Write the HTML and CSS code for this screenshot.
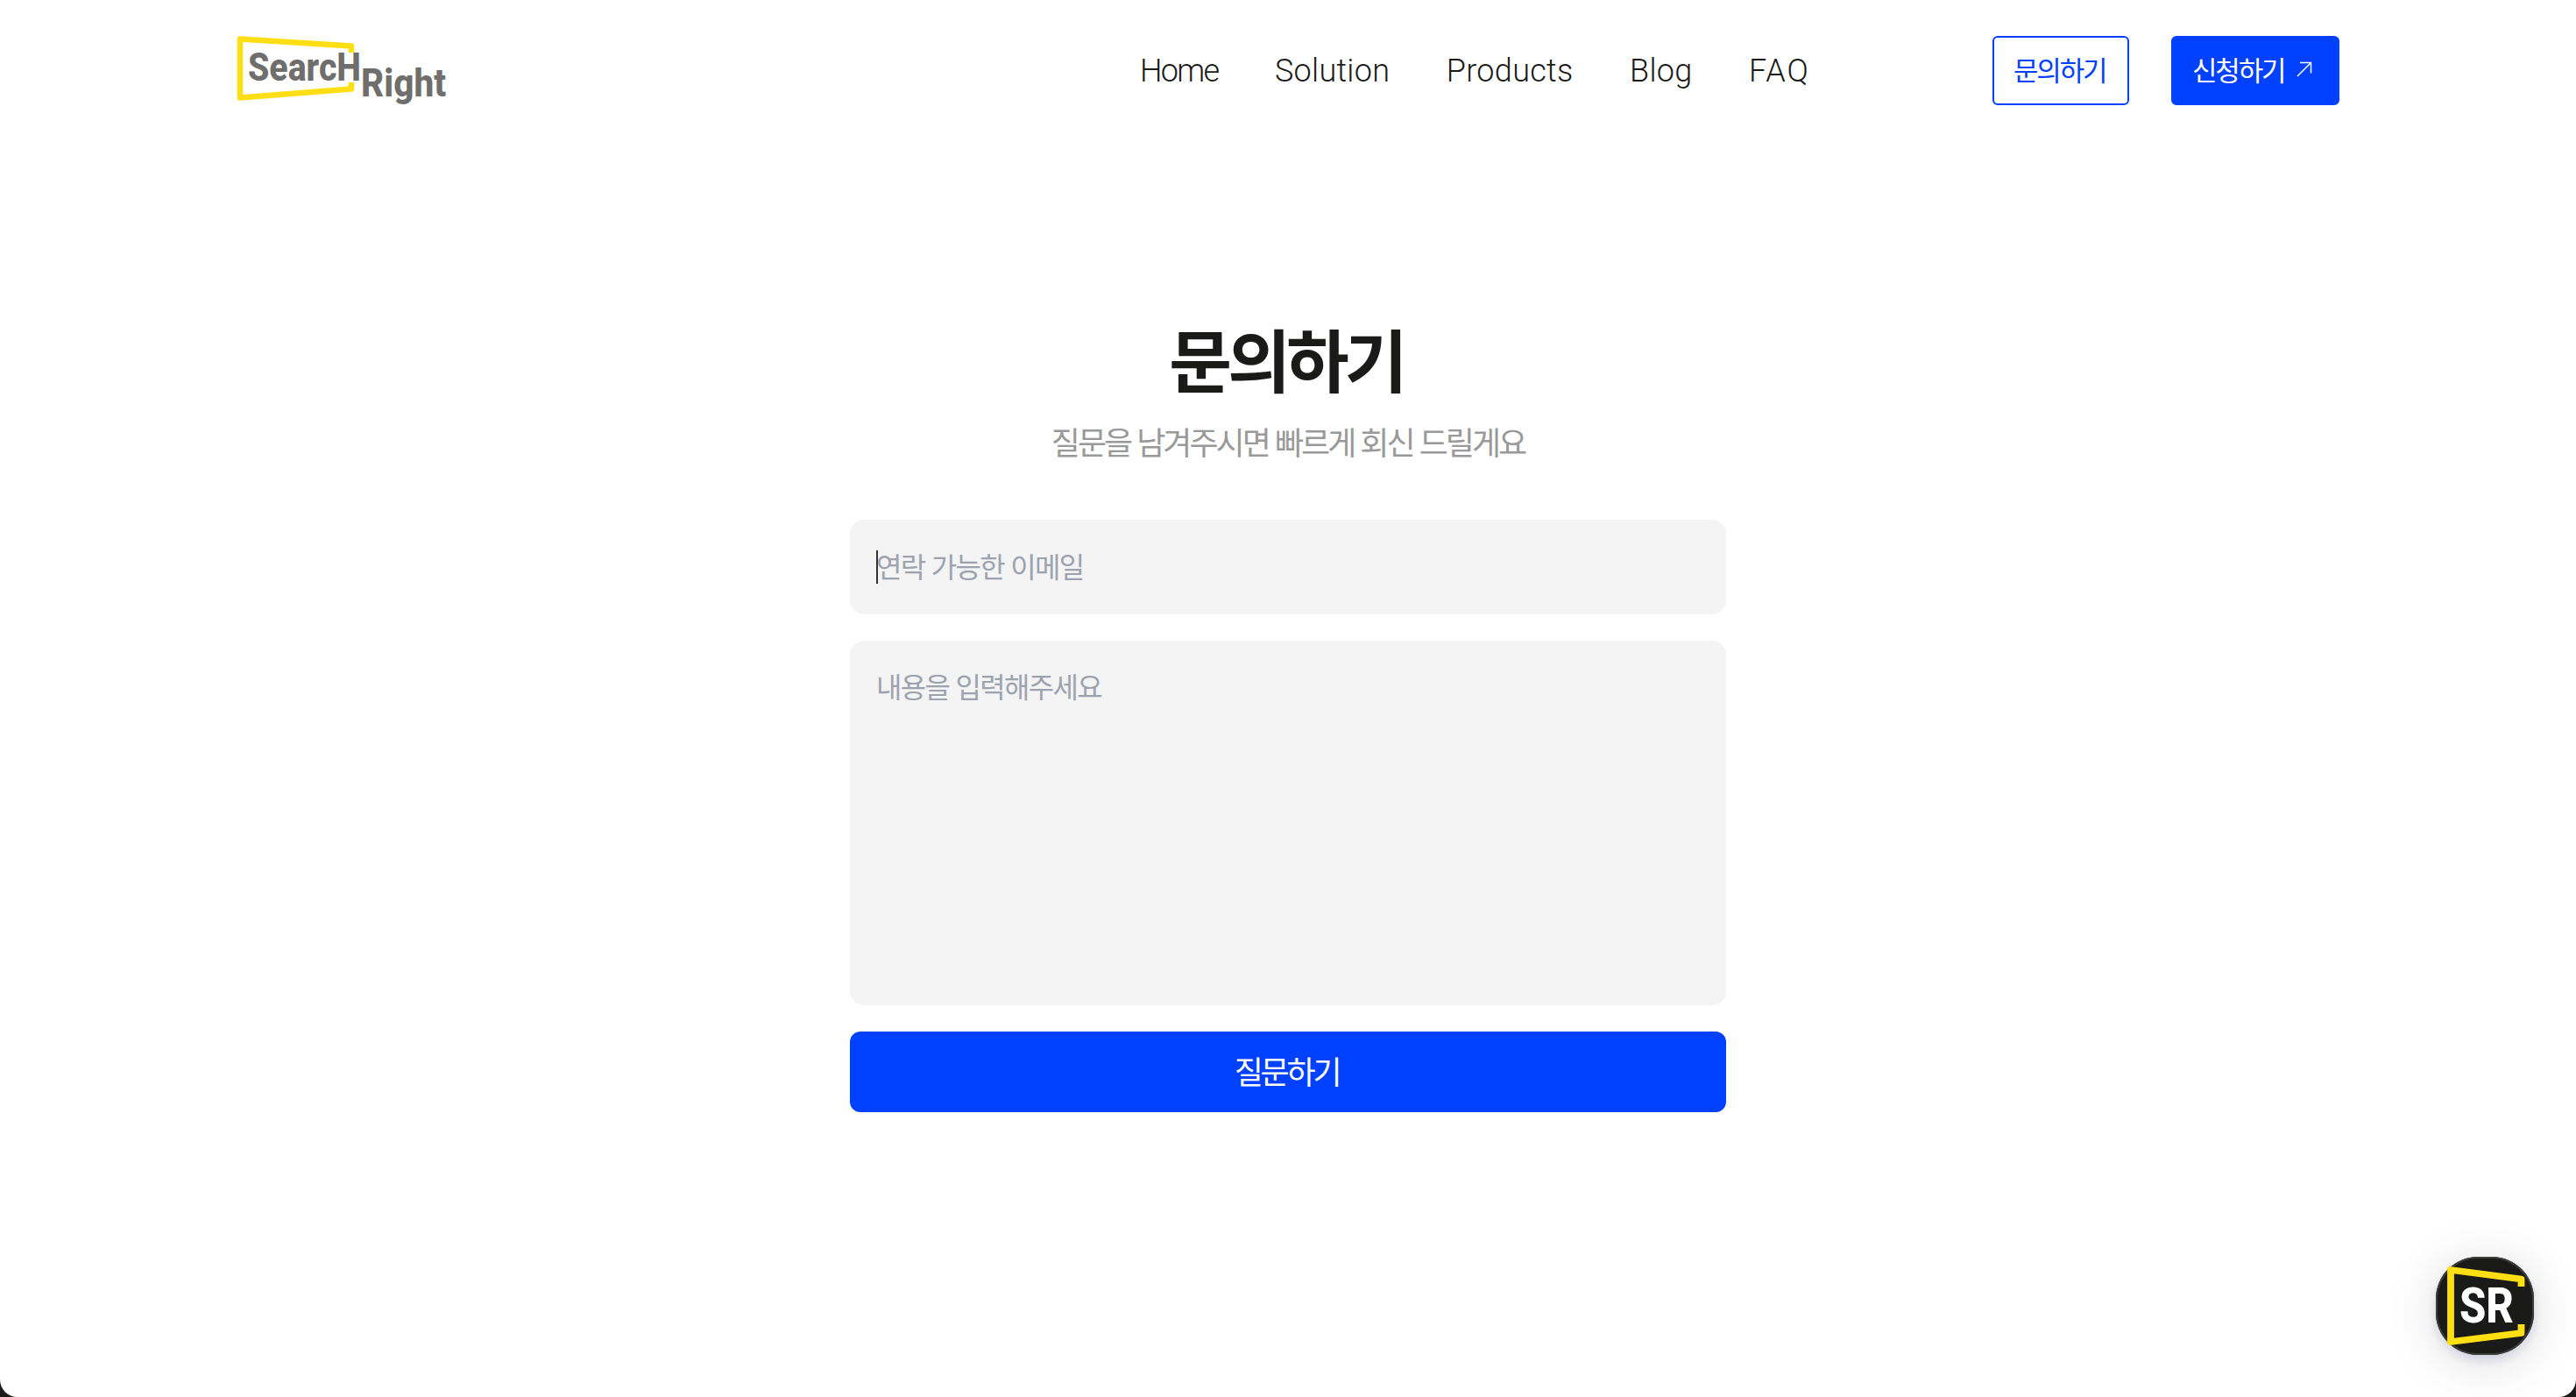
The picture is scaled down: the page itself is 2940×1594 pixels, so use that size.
FILE: index.html
```
<!DOCTYPE html>
<html lang="ko">
<head>
    <meta charset="UTF-8">
    <meta name="viewport" content="width=device-width, initial-scale=1.0">
    <title>SearcHRight</title>
    <link rel="stylesheet" href="styles.css">
</head>
<body>
    <div class="page">
        <header class="header">
            <a class="logo" href="#">
                <svg width="240" height="82" viewBox="0 0 240 82">
                    <path d="M131 20V12.5L4 4.5V71.5L131 61.5V54" fill="none" stroke="#ffdf14" stroke-width="6.6" stroke-linejoin="round"/>
                    <text class="logo-text" x="13" y="52" textLength="129" lengthAdjust="spacingAndGlyphs">SearcH</text>
                    <text class="logo-text" x="142" y="70" textLength="97" lengthAdjust="spacingAndGlyphs">Right</text>
                </svg>
            </a>
            <nav class="nav">
                <a class="nav-home" href="#">Home</a>
                <a href="#">Solution</a>
                <a href="#">Products</a>
                <a href="#">Blog</a>
                <a class="nav-faq" href="#">FAQ</a>
            </nav>
            <div class="actions">
                <a class="btn btn-outline" href="#">문의하기</a>
                <a class="btn btn-fill" href="#">신청하기
                    <svg class="arrow" width="18" height="18" viewBox="0 0 18 18">
                        <path d="M1 17L16.5 1.5M4 1.5H16.5V13.5" fill="none" stroke="#fff" stroke-width="1.5"/>
                    </svg>
                </a>
            </div>
        </header>

        <main class="contact">
            <h1 class="title">문의하기</h1>
            <p class="subtitle">질문을 남겨주시면 빠르게 회신 드릴게요</p>
            <form class="form">
                <div class="field">
                    <input class="input" type="text" placeholder="연락 가능한 이메일">
                    <span class="caret"></span>
                </div>
                <textarea class="input textarea" placeholder="내용을 입력해주세요"></textarea>
                <button class="submit" type="button">질문하기</button>
            </form>
        </main>

        <div class="chat">
            <svg width="112" height="112" viewBox="0 0 112 112">
                <path d="M97.5 34V25.5L17 15V97L97.5 87V77" fill="none" stroke="#ffdf14" stroke-width="7.8" stroke-linejoin="round"/>
                <text class="chat-text" x="27" y="75" textLength="62" lengthAdjust="spacingAndGlyphs">SR</text>
            </svg>
        </div>
    </div>
</body>
</html>
```

FILE: styles.css
```
* {
    box-sizing: border-box;
}

body {
    margin: 0;
    background-color: #1a1a18;
    color: #1a1a18;
    font-family: "Noto Sans CJK KR", sans-serif;
}

a {
    color: inherit;
    text-decoration: none;
}

.page {
    height: 1594px;
    background-color: #fff;
    border-radius: 0 0 20px 20px;
    overflow: hidden;
}

.header {
    display: flex;
    align-items: center;
    height: 161px;
    padding: 0 270px;
}

.logo {
    display: flex;
}

.logo svg {
    overflow: visible;
}

.logo-text {
    font-family: Roboto, sans-serif;
    font-size: 44px;
    font-weight: 800;
    fill: #706e6c;
}

.nav {
    display: flex;
    gap: 64.5px;
    margin-left: auto;
    margin-right: 208px;
    font-family: Roboto, sans-serif;
    font-size: 36px;
    font-weight: 300;
    letter-spacing: 0.3px;
}

.nav-home {
    letter-spacing: -1.7px;
}

.nav-faq {
    letter-spacing: 2px;
}

.actions {
    display: flex;
    gap: 48px;
}

.btn {
    display: flex;
    align-items: center;
    height: 79px;
    padding: 0 22px 4px;
    border: 2px solid #0040ff;
    border-radius: 6px;
    font-size: 31px;
    letter-spacing: -2.2px;
    white-space: nowrap;
}

.btn-outline {
    width: 156px;
    color: #0040ff;
}

.btn-fill {
    width: 192px;
    gap: 14px;
    background-color: #0040ff;
    color: #fff;
}

.arrow {
    flex-shrink: 0;
}

.contact {
    width: 1000px;
    margin: 0 auto;
    padding-top: 187px;
    text-align: center;
}

.title {
    margin: 0;
    padding-right: 4px;
    font-size: 78px;
    font-weight: 700;
    line-height: 120px;
    letter-spacing: -4.9px;
}

.subtitle {
    margin: 10px 0 65px;
    color: #999;
    font-size: 36px;
    line-height: 50px;
    letter-spacing: -3px;
}

.form {
    display: flex;
    flex-direction: column;
    gap: 30px;
}

.field {
    position: relative;
    display: flex;
}

.input {
    width: 100%;
    height: 108px;
    padding: 0 30px 4px;
    border: none;
    border-radius: 16px;
    outline: none;
    background-color: #f4f4f4;
    font-family: inherit;
    font-size: 32px;
    font-weight: 400;
    letter-spacing: -1.7px;
}

.input::placeholder {
    color: #9ca3af;
    opacity: 1;
}

.textarea {
    height: 416px;
    padding-top: 28px;
    resize: none;
}

.caret {
    position: absolute;
    left: 30px;
    top: 35px;
    width: 2px;
    height: 38px;
    background-color: #333;
}

.submit {
    height: 92px;
    padding: 0 3px 4px 0;
    border: none;
    border-radius: 12px;
    background-color: #0040ff;
    color: #fff;
    font-family: inherit;
    font-size: 36px;
    letter-spacing: -3.2px;
}

.chat {
    position: fixed;
    right: 48px;
    bottom: 48px;
    width: 112px;
    height: 112px;
    border-radius: 48px;
    background-color: #1a1a18;
    box-shadow: inset 0 0 0 2px #3c3c3a, 0 6px 12px rgba(60, 70, 140, 0.16), 0 8px 60px rgba(0, 0, 0, 0.14);
}

.chat-text {
    font-family: Roboto, sans-serif;
    font-size: 56px;
    font-weight: 800;
    fill: #fff;
}
```
